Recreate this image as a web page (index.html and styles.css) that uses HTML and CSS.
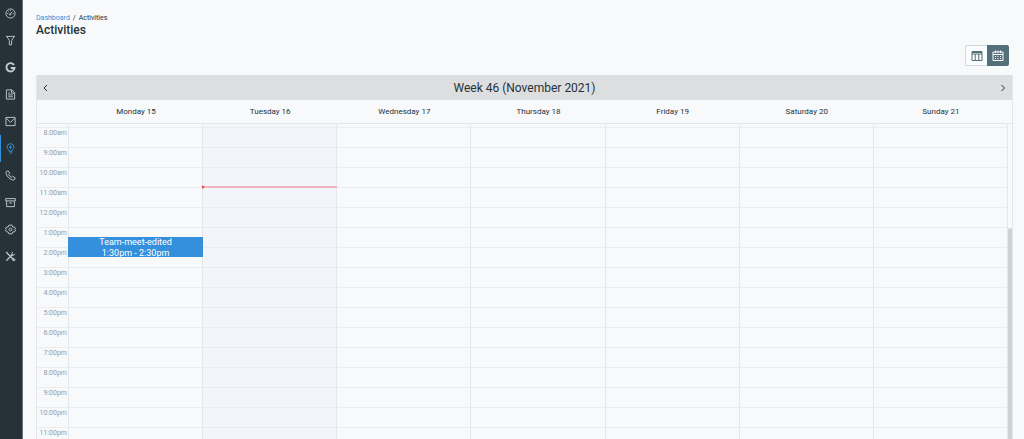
FILE: index.html
```
<!DOCTYPE html>
<html lang="en">
<head>
    <meta charset="UTF-8">
    <meta name="viewport" content="width=device-width, initial-scale=1.0">
    <title>Activities</title>
    <link rel="stylesheet" href="styles.css">
</head>
<body>

    <!-- Sidebar -->
    <nav class="sidebar">
        <a href="#dashboard" aria-label="Dashboard">
            <svg viewBox="0 0 24 24"><circle cx="12" cy="12" r="10"/><path d="M11 14l5-6M5 12h2M7 7l1.500 1.500M12 4.500v2M17 12.500h2"/><circle cx="11" cy="14" r="1.500"/></svg>
        </a>
        <a href="#leads" aria-label="Leads">
            <svg viewBox="0 0 24 24"><path d="M2 3h20M4 3l5.500 9v9.500h5V12L20 3"/></svg>
        </a>
        <a href="#google" aria-label="Google">
            <svg viewBox="0 0 24 24"><path class="thick" d="M19.500 6.500A9 9 0 1 0 21 13H12.500"/></svg>
        </a>
        <a href="#quotes" aria-label="Quotes">
            <svg viewBox="0 0 24 24"><path d="M3 2h12l6 6v14H3zM14 2v7h7M7 9h4M7 13h10M7 17h10"/></svg>
        </a>
        <a href="#mail" aria-label="Mail">
            <svg viewBox="0 0 24 24"><path d="M2 3h20v18H2zM3 5l9 9 9-9"/></svg>
        </a>
        <a href="#activities" class="active" aria-label="Activities">
            <svg viewBox="0 0 24 24"><path d="M9 18v-2.500C6.500 14 4.500 12 4.500 9a7.500 7.500 0 0 1 15 0c0 3-2 5-4.500 6.500V18zM9.500 22h5V18"/><path d="M12 5l3 4-3 4-3-4z" class="solid"/></svg>
        </a>
        <a href="#phone" aria-label="Contacts">
            <svg viewBox="0 0 24 24"><path d="M3 3l4-1 3.500 5.500L8 10c1.500 3 3 4.500 6 6l2.500-2.500L22 17l-1 4c-1 1-3 1-5 0.500C9 19 4.500 14.500 2.500 8 2 6 2 4 3 3z"/></svg>
        </a>
        <a href="#products" aria-label="Products">
            <svg viewBox="0 0 24 24"><path d="M1.500 3.500h21v5h-21zM3.500 9v12h17V9M9 13h6"/></svg>
        </a>
        <a href="#settings" aria-label="Settings">
            <svg viewBox="0 0 24 24"><path d="M8.500 2.500h7l1.500 4 4 0.500 2 3.500-2 1.500 2 1.500-2 3.500-4 0.500-1.500 4h-7l-1.500-4-4-0.500-2-3.500 2-1.500-2-1.500 2-3.500 4-0.500z"/><circle cx="12" cy="12" r="3"/></svg>
        </a>
        <a href="#configuration" aria-label="Configuration">
            <svg viewBox="0 0 24 24"><path class="medium" d="M3 3l18 18M3 21L17 7"/><path d="M17 2l-2 3v4h4l3-2M15 18l3-3 4 4-3 3zM2 4l3-2"/></svg>
        </a>
    </nav>

    <!-- Page Content -->
    <main class="content">
        <div class="breadcrumb">
            <a href="#dashboard">Dashboard</a>
            <span>/</span>
            <span>Activities</span>
        </div>
        <h1>Activities</h1>

        <div class="view-switch">
            <button type="button" aria-label="Table view">
                <svg viewBox="0 0 24 24"><path d="M2 3h20v18H2zM2 8h20M8.500 8v13M15.500 8v13"/><path d="M2 5h20"/></svg>
            </button>
            <button type="button" class="selected" aria-label="Calendar view">
                <svg viewBox="0 0 24 24"><path d="M2 4h20v17H2zM2 9h20M7 1v5M17 1v5M12 1v5"/><path d="M6 13h2M11 13h2M16 13h2M6 17h2M11 17h2M16 17h2"/></svg>
            </button>
        </div>

        <section class="calendar">
            <div class="calendar-title">
                <button type="button" aria-label="Previous week">
                    <svg viewBox="0 0 10 10"><path d="M6 2L3 5l3 3"/></svg>
                </button>
                <h2>Week 46 (November 2021)</h2>
                <button type="button" aria-label="Next week">
                    <svg viewBox="0 0 10 10"><path d="M3.500 2l3 3-3 3"/></svg>
                </button>
            </div>
            <div class="week-days">
                <span></span>
                <span>Monday 15</span>
                <span>Tuesday 16</span>
                <span>Wednesday 17</span>
                <span>Thursday 18</span>
                <span>Friday 19</span>
                <span>Saturday 20</span>
                <span>Sunday 21</span>
            </div>
            <div class="hours">
                <!-- Hour rows are added with JS -->
            </div>
        </section>
    </main>

    <script>
// Events of the week, day 0 is Monday
const events = [
    { day: 0, hour: 13, title: "Team-meet-edited", time: "1:30pm - 2:30pm" }
];

const today = 1;
const currentHour = 11;

function formatHour(hour) {
    return (hour > 12 ? hour - 12 : hour) + ':00' + (hour < 12 ? 'am' : 'pm');
}

// Build one cell, with its event or the current time line
function renderCell(day, hour) {
    const event = events.find(e => e.day === day && e.hour === hour);
    let content = '';

    if (event) {
        content = `<div class="event half-past"><p>${event.title}</p><p>${event.time}</p></div>`;
    }
    if (day === today && hour === currentHour) {
        content += '<div class="now-line"></div>';
    }

    return `<div class="cell${day === today ? ' today' : ''}">${content}</div>`;
}

// Render the hour rows, the first one is mostly scrolled out of view
function renderHours() {
    const container = document.querySelector('.hours');
    let rows = '';

    for (let hour = 7; hour < 24; hour++) {
        const scrolled = hour === 7;
        let cells = '';
        for (let day = 0; day < 7; day++) {
            cells += renderCell(day, hour);
        }
        rows += `<div class="hour-row${scrolled ? ' scrolled' : ''}"><span class="time">${scrolled ? '' : formatHour(hour)}</span>${cells}</div>`;
    }

    container.innerHTML = rows + '<div class="scroll-thumb"></div>';
}

renderHours();
    </script>
</body>
</html>
```

FILE: styles.css
```
* {
    margin: 0;
    padding: 0;
    box-sizing: border-box;
}

body {
    display: flex;
    height: 100vh;
    overflow: hidden;
    font-family: Roboto, Arial, sans-serif;
    font-size: 8px;
    background-color: #f7f9fb;
    color: #263238;
}

button {
    border: none;
    background: none;
    color: inherit;
    cursor: pointer;
}

svg {
    display: block;
    fill: none;
    stroke: currentColor;
    stroke-width: 2;
}

/* Sidebar */
.sidebar {
    width: 23px;
    flex-shrink: 0;
    background-color: #263238;
    border-right: 1px solid #6b7479;
}

.sidebar a {
    display: flex;
    align-items: center;
    justify-content: center;
    height: 27px;
    padding-right: 2px;
    color: #c3cdd3;
    border-left: 1px solid transparent;
}

.sidebar a.active {
    color: #3490dc;
    border-left-color: #3490dc;
}

.sidebar svg {
    width: 11px;
    height: 11px;
}

.sidebar .medium {
    stroke-width: 3;
}

.sidebar .thick {
    stroke-width: 4;
}

.sidebar .solid {
    fill: currentColor;
    stroke: none;
}

/* Page content */
.content {
    flex: 1;
    min-width: 0;
    padding: 12px 11px 0 13px;
}

.breadcrumb {
    display: flex;
    gap: 3px;
    font-size: 7px;
    line-height: 12px;
}

.breadcrumb a {
    color: #3490dc;
    text-decoration: none;
}

h1 {
    font-size: 12px;
    font-weight: 500;
    line-height: 13px;
}

.view-switch {
    display: flex;
    justify-content: flex-end;
    margin: 8px 4px 9px 0;
}

.view-switch button {
    display: flex;
    align-items: center;
    justify-content: center;
    width: 22px;
    height: 21px;
    border: 1px solid #cfd8dc;
    border-right: none;
    border-radius: 2px 0 0 2px;
    background-color: #fbfcfd;
    color: #546e7a;
}

.view-switch .selected {
    border: none;
    border-radius: 0 2px 2px 0;
    background-color: #546e7a;
    color: #ffffff;
}

.view-switch svg {
    width: 12px;
    height: 12px;
}

/* Calendar */
.calendar {
    border: 1px solid #e5e7ea;
    border-top: none;
}

.calendar-title {
    display: flex;
    align-items: center;
    justify-content: space-between;
    height: 25px;
    padding: 0 4px;
    background-color: #dddee0;
}

.calendar-title svg {
    width: 10px;
    height: 10px;
    stroke-width: 1;
}

.calendar-title h2 {
    font-size: 12px;
    font-weight: 400;
}

.week-days,
.hour-row {
    display: grid;
    grid-template-columns: 32px repeat(7, minmax(0, 1fr));
}

.week-days {
    padding-right: 4px;
    border-bottom: 1px solid #e5e7ea;
    line-height: 23px;
    text-align: center;
}

.hours {
    position: relative;
    padding-right: 4px;
}

.hour-row {
    height: 20px;
}

.hour-row.scrolled {
    height: 3px;
}

.time {
    padding-right: 1px;
    border-right: 1px solid #e5e7ea;
    border-top: 1px solid #eaecef;
    font-size: 7px;
    line-height: 10px;
    text-align: right;
    color: #999999;
}

.cell {
    position: relative;
    border-right: 1px solid #e5e7ea;
    border-top: 1px solid #eaecef;
}

.cell.today {
    background-color: #f4f5fb;
}

.scrolled .time,
.scrolled .cell {
    border-top: none;
}

.event {
    position: absolute;
    left: -1px;
    right: -1px;
    z-index: 1;
    height: 20px;
    background-color: #3490dc;
    color: #ffffff;
    font-size: 9px;
    line-height: 11px;
    text-align: center;
}

.event.half-past {
    bottom: -10px;
}

.now-line {
    position: absolute;
    top: -2px;
    left: 0;
    right: -1px;
    height: 2px;
    background-color: #f2b5bf;
}

.now-line::before {
    content: "";
    position: absolute;
    top: -1px;
    left: -1px;
    border: 2px solid transparent;
    border-left: 3px solid #e3505c;
}

.scroll-thumb {
    position: absolute;
    top: 104px;
    right: 0;
    bottom: 0;
    width: 4px;
    border-radius: 2px 2px 0 0;
    background-color: #cfd1d3;
}
```
